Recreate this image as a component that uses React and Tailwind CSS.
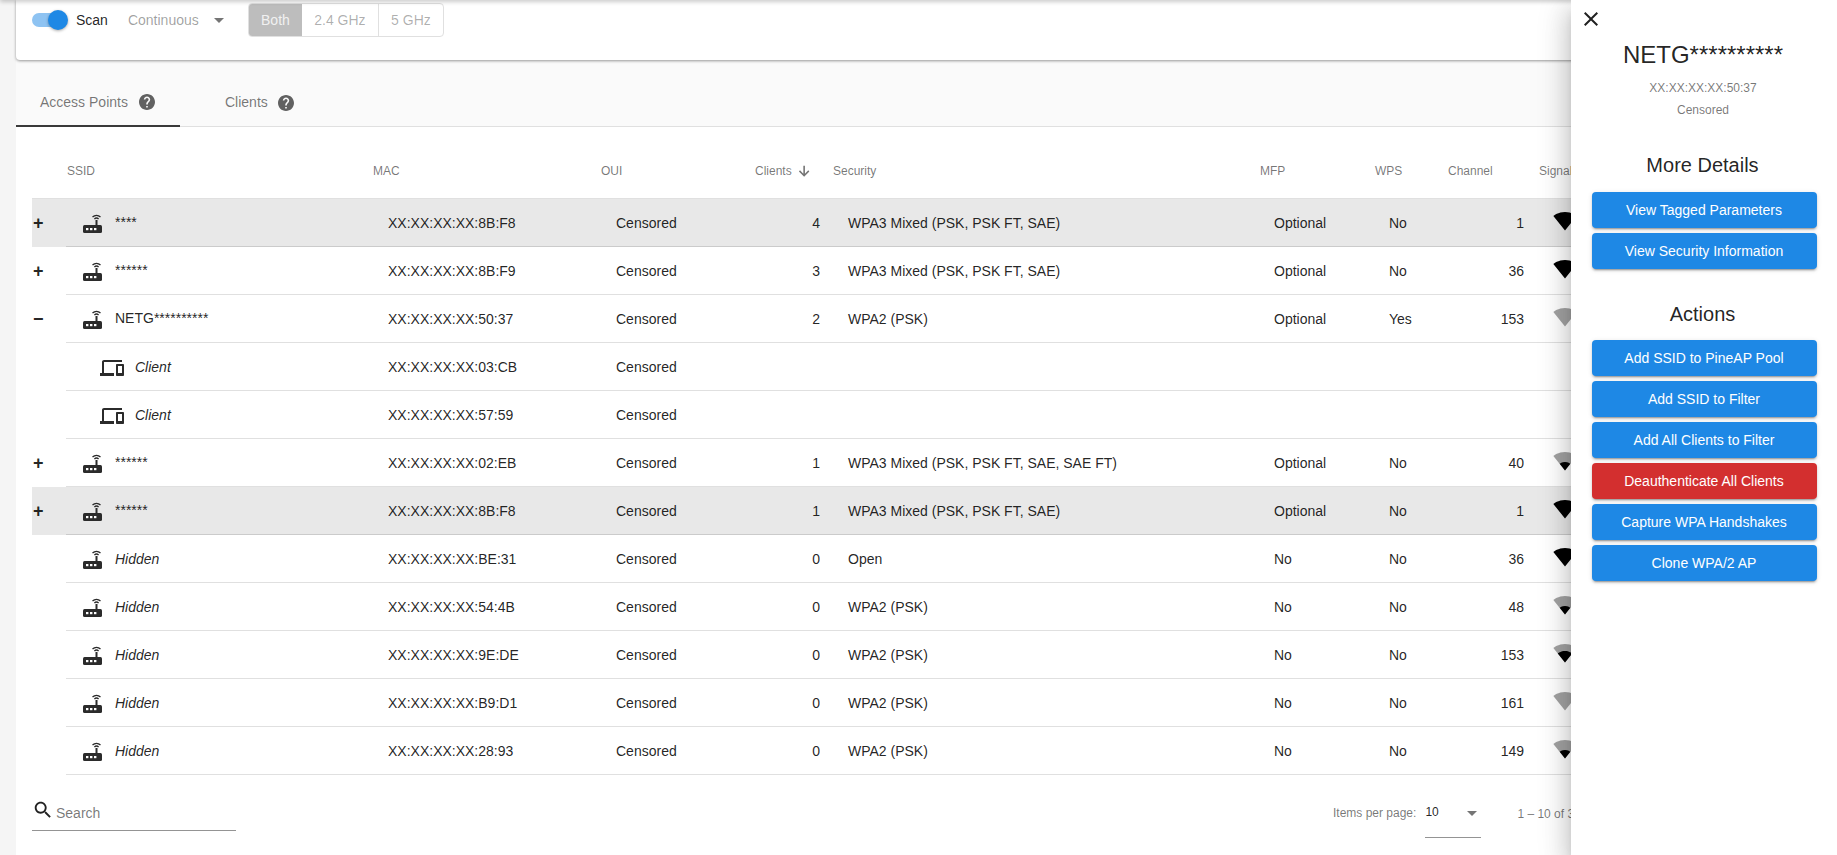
const SIGNAL_PATHS = {
  1: "M6.67 14.86L12 21.49v.01l.01-.01 5.33-6.64C17.06 14.65 15.03 13 12 13s-5.06 1.65-5.33 1.86z",
  2: "M4.79 12.52l7.2 8.98H12l.01-.01 7.2-8.98C18.85 12.24 16.1 10 12 10s-6.85 2.24-7.21 2.52z",
  3: "M3.53 10.95l8.46 10.54.01.01.01-.01 8.46-10.54C20.04 10.62 16.81 8 12 8c-4.81 0-8.04 2.62-8.47 2.95z",
  4: "M12.01 21.49L23.64 7c-.45-.34-4.93-4-11.64-4C5.28 3 .81 6.66.36 7l11.64 14.49z",
};

const rows = [
  { toggle: "+", ssid: "****", mac: "XX:XX:XX:XX:8B:F8", clients: 4, security: "WPA3 Mixed (PSK, PSK FT, SAE)", mfp: "Optional", wps: "No", channel: 1, bars: 4, active: true },
  { toggle: "+", ssid: "******", mac: "XX:XX:XX:XX:8B:F9", clients: 3, security: "WPA3 Mixed (PSK, PSK FT, SAE)", mfp: "Optional", wps: "No", channel: 36, bars: 4 },
  { toggle: "−", ssid: "NETG**********", mac: "XX:XX:XX:XX:50:37", clients: 2, security: "WPA2 (PSK)", mfp: "Optional", wps: "Yes", channel: 153, bars: 0 },
  { client: true, mac: "XX:XX:XX:XX:03:CB" },
  { client: true, mac: "XX:XX:XX:XX:57:59" },
  { toggle: "+", ssid: "******", mac: "XX:XX:XX:XX:02:EB", clients: 1, security: "WPA3 Mixed (PSK, PSK FT, SAE, SAE FT)", mfp: "Optional", wps: "No", channel: 40, bars: 1 },
  { toggle: "+", ssid: "******", mac: "XX:XX:XX:XX:8B:F8", clients: 1, security: "WPA3 Mixed (PSK, PSK FT, SAE)", mfp: "Optional", wps: "No", channel: 1, bars: 4, active: true },
  { hidden: true, mac: "XX:XX:XX:XX:BE:31", clients: 0, security: "Open", mfp: "No", wps: "No", channel: 36, bars: 4 },
  { hidden: true, mac: "XX:XX:XX:XX:54:4B", clients: 0, security: "WPA2 (PSK)", mfp: "No", wps: "No", channel: 48, bars: 1 },
  { hidden: true, mac: "XX:XX:XX:XX:9E:DE", clients: 0, security: "WPA2 (PSK)", mfp: "No", wps: "No", channel: 153, bars: 2 },
  { hidden: true, mac: "XX:XX:XX:XX:B9:D1", clients: 0, security: "WPA2 (PSK)", mfp: "No", wps: "No", channel: 161, bars: 0 },
  { hidden: true, mac: "XX:XX:XX:XX:28:93", clients: 0, security: "WPA2 (PSK)", mfp: "No", wps: "No", channel: 149, bars: 1 },
];

const COLS = "grid grid-cols-[34px_307px_228px_139px_93px_427px_115px_73px_91px_100px]";

const Router = () => (
  <svg width="24" height="24" viewBox="0 0 24 24" className="shrink-0">
    <rect x="3" y="13" width="19" height="8" rx="1.5" fill="#2b2b2b" />
    <rect x="6" y="16" width="2.4" height="2.2" fill="#fff" />
    <rect x="10" y="16" width="2.4" height="2.2" fill="#fff" />
    <rect x="14" y="16" width="2.4" height="2.2" fill="#fff" />
    <rect x="15.5" y="8" width="2" height="5" fill="#2b2b2b" />
    <path d="M12.5 5a6 6 0 0 1 8 0M14.4 7a3 3 0 0 1 4.2 0" fill="none" stroke="#2b2b2b" strokeWidth="1.3" />
  </svg>
);

const Devices = () => (
  <svg width="24" height="24" viewBox="0 0 24 24" fill="#2b2b2b" className="shrink-0">
    <path d="M4 6h18V4H4c-1.1 0-2 .9-2 2v11H0v3h14v-3H4V6zm19 2h-6c-.55 0-1 .45-1 1v10c0 .55.45 1 1 1h6c.55 0 1-.45 1-1V9c0-.55-.45-1-1-1zm-1 9h-4v-7h4v7z" />
  </svg>
);

const Signal = ({ bars }) => (
  <svg width="24" height="24" viewBox="0 0 24 24" className="shrink-0">
    {bars < 4 && <path d={SIGNAL_PATHS[4]} fill="#000" fillOpacity="0.36" />}
    {bars > 0 && <path d={SIGNAL_PATHS[bars]} fill="#000" />}
  </svg>
);

const Help = () => (
  <svg width="16" height="16" viewBox="2 2 20 20" fill="#616161">
    <path d="M12 2C6.48 2 2 6.48 2 12s4.48 10 10 10 10-4.48 10-10S17.52 2 12 2zm1 17h-2v-2h2v2zm2.07-7.75l-.9.92C13.45 12.9 13 13.5 13 15h-2v-.5c0-1.1.45-2.1 1.17-2.83l1.24-1.26c.37-.36.59-.86.59-1.41 0-1.1-.9-2-2-2s-2 .9-2 2H8c0-2.21 1.79-4 4-4s4 1.79 4 4c0 .88-.36 1.68-.93 2.25z" />
  </svg>
);

const Caret = () => <span className="block w-0 h-0 border-x-[5px] border-x-transparent border-t-[5px] border-t-[#757575]" />;

const Row = ({ row }) => (
  <div className={`${COLS} h-[48px] text-[14px] text-[#000000de] ${row.active ? "bg-[#e8e8e8]" : ""}`}>
    <div className="flex items-center pl-px pt-px text-[18px] font-bold">{row.toggle}</div>
    <div className="flex items-center border-b border-[#0000001f] col-span-9 pt-[2px]">
      <div className={`w-[307px] flex items-center shrink-0 gap-[11px] ${row.client ? "pl-[34px]" : "pl-[14px]"}`}>
        {row.client ? <Devices /> : <Router />}
        {row.client ? <i>Client</i> : row.hidden ? <i>Hidden</i> : <span className="-mt-[2px]">{row.ssid}</span>}
      </div>
      <div className="w-[228px] pl-[15px] shrink-0">{row.mac}</div>
      <div className="w-[139px] pl-[15px] shrink-0">Censored</div>
      {!row.client && (
        <>
          <div className="w-[93px] pr-[13px] text-right shrink-0">{row.clients}</div>
          <div className="w-[427px] pl-[15px] shrink-0">{row.security}</div>
          <div className="w-[115px] pl-[14px] shrink-0">{row.mfp}</div>
          <div className="w-[73px] pl-[14px] shrink-0">{row.wps}</div>
          <div className="w-[91px] pr-[15px] text-right shrink-0">{row.channel}</div>
          <div className="pl-[14px] -mt-[6px]"><Signal bars={row.bars} /></div>
        </>
      )}
    </div>
  </div>
);

const ActionButton = ({ children, red }) => (
  <button className={`h-[36px] w-[225px] rounded text-[14px] text-white shadow-[0_3px_1px_-2px_#0003,0_2px_2px_0_#00000024,0_1px_5px_0_#0000001f] ${red ? "bg-[#d32f2f]" : "bg-[#1e88e5]"}`}>
    {children}
  </button>
);

const DetailPanel = () => (
  <aside className="absolute top-0 bottom-0 right-0 w-[266px] bg-white shadow-[0_8px_10px_-5px_#0003,0_16px_24px_2px_#00000024,0_6px_30px_5px_#0000001f] flex flex-col items-center text-[#000000de]">
    <button className="self-start ml-[8px] mt-[7px] h-[24px]">
      <svg width="24" height="24" viewBox="0 0 24 24" fill="#212121">
        <path d="M19 6.41L17.59 5 12 10.59 6.41 5 5 6.41 10.59 12 5 17.59 6.41 19 12 13.41 17.59 19 19 17.59 13.41 12z" />
      </svg>
    </button>
    <h2 className="mt-[8px] pr-[2px] text-[24px] leading-[32px]">NETG**********</h2>
    <p className="mt-[9px] pr-[2px] text-[12px] leading-[16px] text-[#0000008a]">XX:XX:XX:XX:50:37</p>
    <p className="mt-[6px] pr-[2px] text-[12px] leading-[16px] text-[#0000008a]">Censored</p>
    <h3 className="mt-[33px] pr-[3px] text-[20px] leading-[28px]">More Details</h3>
    <div className="mt-[13px] flex flex-col gap-[5px]">
      <ActionButton>View Tagged Parameters</ActionButton>
      <ActionButton>View Security Information</ActionButton>
    </div>
    <h3 className="mt-[31px] pr-[3px] text-[20px] leading-[28px]">Actions</h3>
    <div className="mt-[12px] flex flex-col gap-[5px]">
      <ActionButton>Add SSID to PineAP Pool</ActionButton>
      <ActionButton>Add SSID to Filter</ActionButton>
      <ActionButton>Add All Clients to Filter</ActionButton>
      <ActionButton red>Deauthenticate All Clients</ActionButton>
      <ActionButton>Capture WPA Handshakes</ActionButton>
      <ActionButton>Clone WPA/2 AP</ActionButton>
    </div>
  </aside>
);

export default function App() {
  return (
    <div className="relative h-[855px] w-[1837px] overflow-hidden bg-[#f5f5f5] font-['Liberation_Sans',Arial,sans-serif]">
      <div className="ml-[16px] h-full flex flex-col bg-[#fafafa]">
        {/* scan controls card, scrolled partly out of view */}
        <div className="h-[60px] shrink-0 bg-white rounded-b shadow-[0_1px_3px_0_#0006] pl-[16px] pt-[3px] flex items-start text-[14px]">
          <div className="relative w-[36px] h-[33px] flex items-center pt-[1px]">
            <div className="w-[32px] h-[14px] rounded-full bg-[#8ec3f2]" />
            <div className="absolute left-[16px] top-[7px] w-[20px] h-[20px] rounded-full bg-[#1e88e5] shadow-[0_1px_3px_#0005]" />
          </div>
          <span className="ml-[8px] mt-[1px] h-[33px] leading-[33px] text-[#000000de]">Scan</span>
          <div className="ml-[20px] w-[120px] h-[33px] pt-[2px] flex items-center text-[#00000061]">
            <span className="w-[86px]">Continuous</span>
            <Caret />
          </div>
          <div className="flex h-[34px] border border-[#e0e0e0] rounded overflow-hidden text-[#00000052] leading-[33px]">
            <div className="w-[53px] text-center bg-[#bdbdbd] text-[#fffc]">Both</div>
            <div className="w-[76px] text-center">2.4 GHz</div>
            <div className="w-[65px] text-center border-l border-[#e0e0e0]">5 GHz</div>
          </div>
        </div>

        {/* tabs */}
        <div className="mt-[12px] h-[55px] shrink-0 flex border-b border-[#e0e0e0] text-[14px] text-[#0000008a]">
          <div className="w-[164px] h-[55px] border-b-2 border-[#3a3a3a] pl-[24px] pt-[7px] flex items-center gap-[11px]">
            Access Points <Help />
          </div>
          <div className="pl-[45px] pt-[7px] flex items-center gap-[10px]">
            Clients <Help />
          </div>
        </div>

        <div className="flex-1 bg-white pl-[16px]">
          <div className={`${COLS} h-[72px] border-b border-[#0000001f] text-[12px] text-[#0000008a] pt-[35px]`}>
            <div />
            <div className="pl-px">SSID</div>
            <div>MAC</div>
            <div>OUI</div>
            <div className="pl-[15px] flex gap-[4px] h-[16px]">
              Clients
              <svg width="16" height="16" viewBox="0 0 24 24" fill="#757575" className="mt-[1px]">
                <path d="M11 4h2.4v12l5-5 1.6 1.7-7.8 7.8-7.8-7.8L6 11l5 5z" />
              </svg>
            </div>
            <div>Security</div>
            <div>MFP</div>
            <div>WPS</div>
            <div>Channel</div>
            <div>Signal</div>
          </div>

          {rows.map((row, i) => (
            <Row key={i} row={row} />
          ))}

          <div className="relative flex items-start">
            <div className="mt-[20px] w-[204px] h-[36px] border-b border-[#949494] flex items-center text-[14px] text-[#0000008a]">
              <svg width="22" height="22" viewBox="0 0 24 24" fill="#212121" className="-mt-[6px]">
                <path d="M15.5 14h-.79l-.28-.27C15.41 12.59 16 11.11 16 9.5 16 5.91 13.09 3 9.5 3S3 5.91 3 9.5 5.91 16 9.5 16c1.61 0 3.09-.59 4.23-1.57l.27.28v.79l5 4.99L20.49 19l-4.99-5zm-6 0C7.01 14 5 11.99 5 9.5S7.01 5 9.5 5 14 7.01 14 9.5 11.99 14 9.5 14z" />
              </svg>
              <span className="ml-[2px] mt-[2px]">Search</span>
            </div>
            <div className="ml-auto w-[504px] shrink-0 flex text-[12px] text-[#0000008a]">
              <span className="mt-[29px]">Items per page:</span>
              <div className="ml-[9px] mt-[16px] w-[56px] h-[47px] border-b border-[#949494] flex items-start pt-[12px] justify-between text-[#000000de] pr-[4px]">
                <span>10</span>
                <span className="mt-[8px]"><Caret /></span>
              </div>
              <span className="ml-[36px] mt-[30px] whitespace-nowrap">1 – 10 of 35</span>
            </div>
          </div>
        </div>
      </div>

      {/* toolbar shadow along the top edge */}
      <div className="absolute -top-[8px] inset-x-0 h-[8px] shadow-[0_2px_4px_#0003]" />
      <DetailPanel />
    </div>
  );
}
